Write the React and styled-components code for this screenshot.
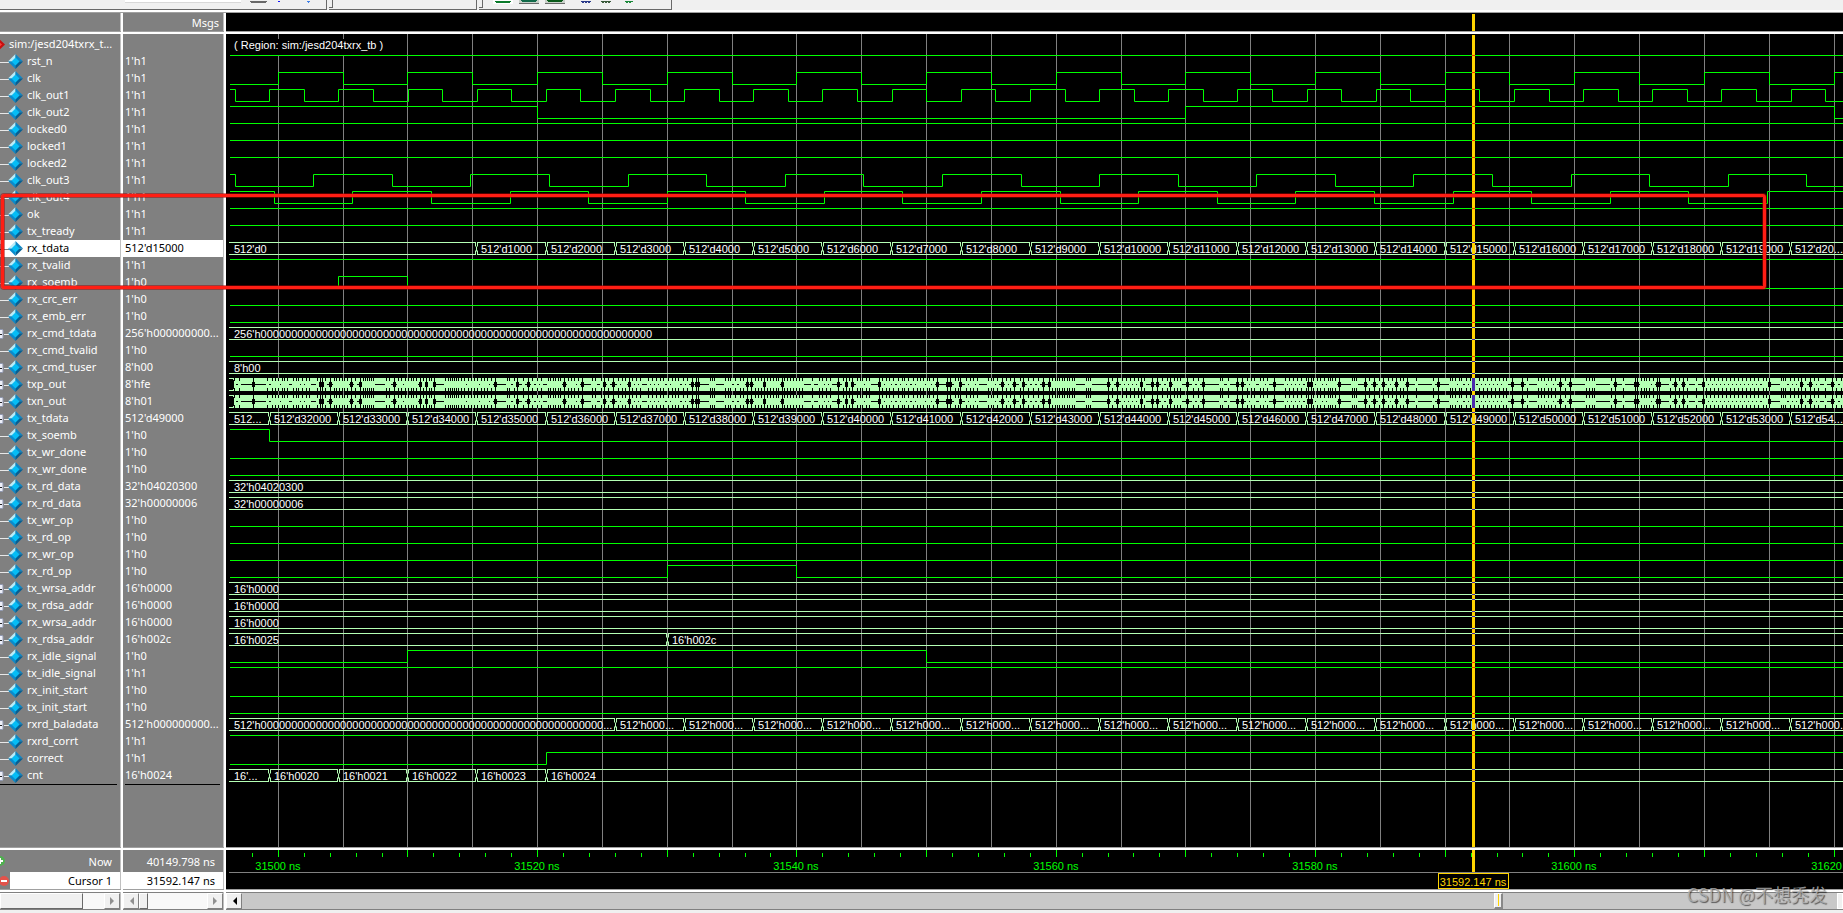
import React from "react";
import styled, { createGlobalStyle } from "styled-components";

const GREEN = "#00ff00";
const MINT = "#b4ffb4";
const GOLD = "#ffd500";
const FONT = '"Noto Sans", sans-serif';
const WAVE_FONT = '"Liberation Sans", sans-serif';

const GlobalStyle = createGlobalStyle`
  * { box-sizing: border-box; }
  body { margin: 0; background: #f0f0f0; font: 11px/17px ${FONT}; color: #fff; }
  ul { list-style: none; margin: 0; padding: 0; }
  button { font: inherit; padding: 0; }
`;

/* ---------- data ---------- */

const CLOCK_PX = 12.965;
const ORIGIN = 52.3;
const at = (ns) => Math.floor(ORIGIN + (ns - 31500) * CLOCK_PX);
const frame = (n) => Math.floor(43.5 + n * 69.15);
const LAST_FRAME = 22;
const END = 2600;

const toggles = (first, half, count) =>
  Array.from({ length: count }, (_, i) => Math.floor(first + i * half));
const frames = (firstFrame, format) =>
  Array.from({ length: LAST_FRAME - firstFrame + 1 }, (_, i) => [
    frame(firstFrame + i),
    format(i, firstFrame + i === LAST_FRAME),
  ]);
const counter = (first) => (i, last) => {
  const value = String(first + i * 1000);
  return `512'd${last ? `${value.slice(0, 2)}...` : value}`;
};

const bit = (name, value, level, edges = []) => ({ name, value, level, edges });
const bus = (name, value, cells) => ({ name, value, cells });

const SIGNALS = [
  bit("rst_n", "1'h1", 1),
  bit("clk", "1'h1", 0, toggles(ORIGIN, 64.825, 30)),
  bit("clk_out1", "1'h1", 1, toggles(9.2, 34.575, 60)),
  bit("clk_out2", "1'h1", 1, [at(31520), at(31570), at(31620)]),
  bit("locked0", "1'h1", 1),
  bit("locked1", "1'h1", 1),
  bit("locked2", "1'h1", 1),
  bit("clk_out3", "1'h1", 1, toggles(9.2, 78.58, 24)),
  bit("clk_out4", "1'h1", 1, toggles(48.3, 78.58, 24)),
  bit("ok", "1'h1", 1),
  bit("tx_tready", "1'h1", 1),
  { ...bus("rx_tdata", "512'd15000", [[3, "512'd0"], ...frames(3, counter(1000))]), selected: true },
  bit("rx_tvalid", "1'h1", 1),
  bit("rx_soemb", "1'h0", 0, [frame(1), frame(2)]),
  bit("rx_crc_err", "1'h0", 0),
  bit("rx_emb_err", "1'h0", 0),
  bus("rx_cmd_tdata", "256'h000000000...", [[3, "256'h" + "0".repeat(64)]]),
  bit("rx_cmd_tvalid", "1'h0", 0),
  bus("rx_cmd_tuser", "8'h00", [[3, "8'h00"]]),
  { name: "txp_out", value: "8'hfe", serial: true },
  { name: "txn_out", value: "8'h01", serial: true },
  bus("tx_tdata", "512'd49000", [[3, "512..."], ...frames(0, counter(32000))]),
  bit("tx_soemb", "1'h0", 1, [frame(0)]),
  bit("tx_wr_done", "1'h0", 0),
  bit("rx_wr_done", "1'h0", 0),
  bus("tx_rd_data", "32'h04020300", [[3, "32'h04020300"]]),
  bus("rx_rd_data", "32'h00000006", [[3, "32'h00000006"]]),
  bit("tx_wr_op", "1'h0", 0),
  bit("tx_rd_op", "1'h0", 0),
  bit("rx_wr_op", "1'h0", 0),
  bit("rx_rd_op", "1'h0", 0, [at(31530), at(31540)]),
  bus("tx_wrsa_addr", "16'h0000", [[3, "16'h0000"]]),
  bus("tx_rdsa_addr", "16'h0000", [[3, "16'h0000"]]),
  bus("rx_wrsa_addr", "16'h0000", [[3, "16'h0000"]]),
  bus("rx_rdsa_addr", "16'h002c", [[3, "16'h0025"], [at(31530), "16'h002c"]]),
  bit("rx_idle_signal", "1'h0", 0, [at(31510), at(31550)]),
  bit("tx_idle_signal", "1'h1", 1),
  bit("rx_init_start", "1'h0", 0),
  bit("tx_init_start", "1'h0", 0),
  bus("rxrd_baladata", "512'h000000000...", [[3, "512'h" + "0".repeat(56) + "..."], ...frames(5, () => "512'h000...")]),
  bit("rxrd_corrt", "1'h1", 1),
  bit("correct", "1'h1", 0, [frame(4)]),
  bus("cnt", "16'h0024", [[3, "16'..."], [frame(0), "16'h0020"], [frame(1), "16'h0021"], [frame(2), "16'h0022"], [frame(3), "16'h0023"], [frame(4), "16'h0024"]]),
];

/* Transitions of the serial lanes; a negative entry is a burst too fast to resolve. */
const BURSTS = [
  { from: -1, scale: 3, marks: [27,43,-83,125,141,150,158,171,177,187,203,212,220,232,242,253,275,-284,-290,300,-316,327,334,342,350,358,366,-377,390,-405,415,421,427,433,439,443,482,492,-508,520,528,540,549,557,565,574,-585,595,-603,612,618,-628,660,668,674,680,686,692,700,708,716,728,738,748,757,768,778,786,798,-810,845,851,866,-876,893,-908,922,936,948,968,975,983,990,998,1006,-1018,1030,1038,1048,1060,-1070,1102,1110,1128,-1137,1148,-1163,1178,1190,1200,-1213,1222,1232,1245,1270,1280,1292,1305,1315,1330,1340,1350,1360,1375,1387,-1400,-1413,-1418,1455,1462,1468,1500,1508,1516,1530,1545,1555] },
  { from: 519, scale: 3, marks: [-5,-17,30,38,48,-56,66,75,85,93,100,-110,118,125,135,145,153,162,172,202,222,232,243,256,-280,293,-303,312,-322,335,345,352,362,372,-402,412,422,432,445,460,470,478,490,503,515,525,535,545,553,563,-577,-607,-615,630,638,-645,662,675,685,697,730,738,745,755,-770,782,795,-808,825,-835,850,865,878,-893,-911,922,930,935,942,950,958,965,973,980,988,1022,1029,1035,-1090,1100,-1115,1130,1142,1155,1168,1178,-1187,1197,-1220,-1237,1250,1265,-1275,1288,1295,1305,-1325,1345,1358,-1375,1425,1432,1450,-1475,-1490,1505,1518,1528,1545,1555] },
  { from: 1039, scale: 2.713, marks: [5,-24,55,65,77,88,98,110,-118,-124,130,140,150,160,170,176,182,190,-200,235,241,247,-272,283,-295,308,-320,333,345,-355,365,375,-385,411,455,-470,502,508,516,525,533,545,555,567,580,592,602,612,625,635,645,655,-670,-697,710,740,748,757,767,777,787,-800,813,-828,870,878,886,892,940,-950,970,-1004,-1010,1020,1028,1035,1043,1052,-1064,-1069,1100,-1113,1122,-1133,1145,1170,-1187,1197,1207,1218,1228,1240,1250,1262,1273,1283,1293,1305,1317,1328,1338,1350,1360,-1368,1400,1406,1412,1425,1435,1445,-1455,1465,-1478,1490,1500,1520,-1537,1550,1562] },
];
const MARKS = BURSTS.flatMap(({ from, scale, marks }) =>
  marks.map((m) => ({ x: from + Math.round(Math.abs(m) / scale), dense: m < 0 }))
);

/* ---------- toolbar ---------- */

const Toolbar = styled.header`
  display: flex; gap: 2px; height: 13px; overflow: hidden;
  background: #f0f0f0; border-bottom: 1px solid #a0a0a0; box-shadow: inset 0 -2px #fff;
`;
const ToolGroup = styled.div`
  display: flex; flex: none; align-items: flex-start; gap: ${(p) => p.$gap || 6}px;
  width: ${(p) => p.$width}px; height: 10px; padding-left: ${(p) => p.$pad || 0}px;
  border-right: 1px solid #696969; border-bottom: 1px solid #696969; overflow: hidden;
`;
const Grip = styled.i`
  width: 4px; height: 8px; margin-right: 4px;
  border-right: 1px solid #696969; border-bottom: 1px solid #696969;
`;
const ToolField = styled.input`
  width: 116px; height: 3px; padding: 0; border: 0; border-bottom: 1px solid #d8d8d8; background: #fff;
`;
const ToolButton = styled.button`
  display: block; width: 20px; height: 4px; border: 0; overflow: hidden;
  background: ${(p) => (p.$on ? "#fff" : p.$raised ? "#c8d0c8" : "transparent")};
  border-bottom: ${(p) => (p.$raised ? "1px solid #696969" : "0")};
  svg { display: block; }
`;

function ToolIcon({ fill, x = 4, w = 12, solid }) {
  return (
    <svg width="20" height="3" aria-hidden="true">
      <path d={`M${x} 0h${w}M${x + 1} 1h${w - 2}`} stroke={fill} strokeWidth="2" strokeDasharray={solid || w > 15 ? "none" : "2 1"} />
    </svg>
  );
}

/* ---------- panes ---------- */

const Window = styled.div`
  position: relative; display: flex; flex-direction: column; min-height: 100vh; overflow: hidden;
`;
const Panes = styled.main`
  display: flex; flex: 1; padding-bottom: 3px; background: #f0f0f0;
`;
const Pane = styled.section`
  display: flex; flex-direction: column; min-width: 0;
  flex: ${(p) => (p.$width ? `0 0 ${p.$width}px` : "1 1 0")};
  background: ${(p) => (p.$dark ? "#000" : "#808080")};
  border-right: ${(p) => (p.$dark ? "0" : "2px solid #fff")};
  box-shadow: ${(p) => (p.$dark ? "none" : "inset -1px 0 #c0c0c0")};
`;
const PaneHead = styled.div`
  flex: none; height: 21px; padding: 1px 5px 0 0; text-align: right;
  border-bottom: 2px solid #fff; box-shadow: inset 0 -1px #a0a0a0;
`;
const PaneBody = styled.div`
  flex: 1 0 781px; padding-top: ${(p) => (p.$flush ? 0 : 2)}px; overflow: hidden;
  svg { display: block; }
`;
const PaneFoot = styled.div`
  flex: none; height: 44px; overflow: hidden;
  border-top: 2px solid #fff; border-bottom: 2px solid #fff;
  box-shadow: 0 -1px #a0a0a0, inset 0 -1px #a0a0a0;
  svg { display: block; }
`;
const FootRow = styled.div`
  display: flex; align-items: center; justify-content: flex-end;
  height: ${(p) => (p.$cursor ? 17 : 22)}px; margin-right: 1px; padding-right: 8px;
  background: ${(p) => (p.$cursor ? "#fff" : "transparent")};
  color: ${(p) => (p.$cursor ? "#000" : "#fff")};
  svg { flex: none; }
`;
const FootIcon = styled.span`
  display: flex; align-items: center; width: 10px; height: 100%; margin-right: auto; background: #808080;
`;
const SignalRow = styled.li`
  display: flex; align-items: flex-start; height: 17px; line-height: 15px;
  margin-right: 1px; white-space: nowrap; overflow: hidden;
  background: ${(p) => (p.$selected ? "#fff" : "transparent")};
  color: ${(p) => (p.$selected ? "#000" : "#fff")};
  svg { flex: none; margin-right: 3px; }
`;
const ValueRow = styled(SignalRow)`
  padding-left: 2px;
`;
const ListEnd = styled.hr`
  height: 1px; margin: 0 4px 0 ${(p) => (p.$inset ? 2 : 0)}px; border: 0; background: #000;
`;

function SignalIcon({ bus: isBus, selected }) {
  return (
    <svg width="24" height="17" aria-hidden="true">
      <path d={isBus ? "M4 9.5h5" : "M0 9.5h9"} stroke={selected ? "#808080" : "#e8e8e8"} />
      {isBus && <rect x="-6" y="4.5" width="9" height="9" rx="1" fill={selected ? "#a8a8a8" : "#eef0fa"} stroke="#9098b0" />}
      {isBus && <path d="M-2 9.5h4" stroke="#222" />}
      <path d="M15.500 1L8 8.500H15.500Z" fill="#b9ecf9" />
      <path d="M15.500 1L23 8.500H15.500Z" fill="#0e86c4" />
      <path d="M8 8.500L15.500 16V8.500Z" fill="#0a8bcc" />
      <path d="M23 8.500L15.500 16V8.500Z" fill="#055f92" />
      <path d="M15.500 4.500L19.500 8.500L15.500 12.500L11.500 8.500Z" fill="#05bdf5" />
    </svg>
  );
}

/* ---------- scroll bars ---------- */

const ScrollBar = styled.div`
  display: flex; flex: none; height: 18px; margin-right: ${(p) => (p.$wave ? 0 : 1)}px;
  border-top: 1px solid #808080; border-bottom: 1px solid #808080;
  background: ${(p) => (p.$wave ? "#c8c8c8" : "#f8f8f8")};
`;
const ScrollThumb = styled.div`
  width: ${(p) => p.$width}px; margin-right: auto; background: #f0f0f0;
  border: 1px solid #fff; border-right-color: #696969; border-bottom-color: #696969;
`;
const ScrollButton = styled.button`
  display: flex; align-items: center; justify-content: center;
  width: 16px; height: 16px; background: #f0f0f0;
  border: 1px solid #fff; border-right-color: #808080; border-bottom-color: #808080;
`;
const CursorThumb = styled.div`
  width: 9px; margin-left: auto; margin-right: ${(p) => p.$after}px; background: #f0f0f0;
  border: 1px solid #fff; border-right: 2px solid #888; border-bottom: 2px solid #888;
  &::after { content: ""; display: block; width: 1px; height: 12px; margin-left: 3px; background: ${GOLD}; }
`;
const EdgeThumb = styled.div`
  width: 6px; background: #f0f0f0; border: 1px solid #fff;
`;

function Arrow({ left, color = "#909090" }) {
  return (
    <svg width="5" height="8" aria-hidden="true">
      <path d={left ? "M5 0V8L1 4Z" : "M0 0V8L4 4Z"} fill={color} />
    </svg>
  );
}

/* ---------- wave forms ---------- */

const WaveText = styled.text`
  font: 11px ${WAVE_FONT}; white-space: pre;
  fill: ${(p) => p.$fill || "#fff"};
`;

function bitPath({ level, edges }, y) {
  let high = level === 1;
  const h = (v) => (v ? y : y + 12);
  let d = `M4 ${h(high)}`;
  edges.forEach((x) => {
    d += `H${x + 0.5}V${h(!high)}`;
    high = !high;
  });
  return `${d}H${END}`;
}

function BusWave({ cells, y }) {
  let d = "";
  cells.forEach(([x], i) => {
    const next = i + 1 < cells.length ? cells[i + 1][0] : END;
    const start = i ? x + 1 : x;
    d += `M${start} ${y}H${next}M${start} ${y + 12}H${next}`;
    if (i) {
      d += `M${x - 0.5} ${y}v4M${x + 1.5} ${y}v4M${x + 0.5} ${y + 4}v5M${x - 0.5} ${y + 8}v4M${x + 1.5} ${y + 8}v4`;
    }
  });
  return (
    <g>
      <path d={d} stroke={MINT} fill="none" />
      {cells.map(([x, label]) => (
        <WaveText key={x} x={x + 5} y={y + 10}>{label}</WaveText>
      ))}
    </g>
  );
}

function SerialWave({ y }) {
  const top = y - 0.5;
  const notches = MARKS.map(({ x }) => `M${x + 0.5} ${top}v3m0 7v3`).join("");
  const gaps = MARKS.map(({ x }) => `M${x - 1} ${y + 6}h3`).join("");
  const lenses = MARKS.filter((m) => m.dense)
    .map(({ x }) => `M${x - 1} ${top + 4}h3v5h-3zM${x} ${top + 3}h1v7h-1z`)
    .join("");
  return (
    <g shapeRendering="crispEdges">
      <rect x="3" y={top} width={END} height="13" fill={MINT} />
      <path d={`M8 ${y + 6}H${END}`} stroke="#000" />
      <path d={gaps} stroke={MINT} />
      <path d={notches} stroke="#000" />
      <path d={lenses} fill="#000" />
      <path d={`M3 ${top + 1}h4l1 2v7l-1 2h-4z`} fill="#000" />
    </g>
  );
}

const CURSOR = 1247.5;

function WaveCanvas() {
  const grid = Array.from({ length: 36 }, (_, i) => `M${at(31500 + 5 * i) + 0.5} 0V2000`).join("");
  return (
    <svg width="100%" height="813" role="img" aria-label="Wave forms">
      <path d={grid} stroke="#808080" />
      <rect x="4" y="5" width="162" height="16" fill="#000" />
      <WaveText x="8" y="15">( Region: sim:/jesd204txrx_tb )</WaveText>
      {SIGNALS.map((s, i) => {
        const y = 21.5 + 17 * i;
        if (s.serial) return <SerialWave key={s.name} y={y} />;
        if (s.cells) return <BusWave key={s.name} cells={s.cells} y={y} />;
        return <path key={s.name} d={bitPath(s, y)} stroke={GREEN} fill="none" />;
      })}
      <path d={`M${CURSOR} 1V813`} stroke={GOLD} strokeWidth="3" />
      {SIGNALS.map((s, i) => (
        <path
          key={s.name}
          d={s.serial ? `M${CURSOR} ${21 + 17 * i}v13` : `M${CURSOR - 1.5} ${21.5 + 17 * i + (s.value === "1'h0" ? 12 : 0)}h3${s.cells ? "m-3 12h3" : ""}`}
          stroke={s.serial || s.cells ? "#4b2aae" : "#ff2a00"}
          strokeWidth={s.serial ? 3 : 1}
        />
      ))}
    </svg>
  );
}

function HeadCursor() {
  return (
    <svg width="100%" height="18" aria-hidden="true">
      <path d={`M${CURSOR} 1V18`} stroke={GOLD} strokeWidth="3" />
    </svg>
  );
}

const WaveHead = styled(PaneHead)`
  padding: 0;
  svg { display: block; }
`;

function TimeRuler() {
  const steps = Array.from({ length: 64 }, (_, i) => 31498 + 2 * i);
  return (
    <svg width="100%" height="39" role="img" aria-label="Time line">
      {steps.map((ns) => (
        <path key={ns} d={ns % 10 === 0 ? `M${at(ns) + 0.5} 0v7` : `M${at(ns) + 0.5} 3v4`} stroke={GREEN} />
      ))}
      {steps.filter((ns) => ns % 20 === 0).map((ns) => (
        <WaveText key={ns} x={at(ns)} y="20" textAnchor="middle" $fill={GREEN}>{`${ns} ns`}</WaveText>
      ))}
      <path d={`M3 22.5H${END}`} stroke="#808080" />
      <path d={`M${CURSOR} 0V22`} stroke={GOLD} strokeWidth="3" />
      <rect x="1212.500" y="23.500" width="70" height="15" fill="#000" stroke={GOLD} />
      <WaveText x="1247" y="36" textAnchor="middle" $fill={GOLD}>31592.147 ns</WaveText>
    </svg>
  );
}

/* ---------- overlays ---------- */

const Highlight = styled.div`
  position: absolute; top: 194px; left: 1px; right: 77px; height: 95px;
  border: 3px solid #ff1e14; border-radius: 3px; pointer-events: none;
  box-shadow: 0 0 0 1px #a0000080, inset 0 0 0 1px #a0000080;
`;
const Watermark = styled.div`
  position: absolute; right: 16px; bottom: 7px; color: #b4b4b4cc; pointer-events: none;
  font: 18px/24px "Noto Sans CJK SC", sans-serif;
  text-shadow: 1px 1px 1px #00000090; white-space: nowrap;
`;

export default function App() {
  return (
    <>
      <GlobalStyle />
      <Window>
        <Toolbar>
          <ToolGroup $width={327} $pad={125} $gap={9}>
            <ToolField aria-label="Search" />
            <ToolButton aria-label="Search type"><ToolIcon fill="#696969" x={0} w={17} /></ToolButton>
            <ToolButton aria-label="Find previous"><ToolIcon fill="#1414ff" x={0} w={2} solid /></ToolButton>
            <ToolButton aria-label="Find next"><ToolIcon fill="#3f7fe8" x={0} w={3} solid /></ToolButton>
          </ToolGroup>
          <ToolGroup $width={148}><Grip /></ToolGroup>
          <ToolGroup $width={193}>
            <Grip />
            <ToolButton $on aria-label="Wave view"><ToolIcon fill="#0a7a2a" x={2} w={16} /></ToolButton>
            <ToolButton $raised aria-label="Edge view"><ToolIcon fill="#126a4a" x={2} w={16} /></ToolButton>
            <ToolButton $raised aria-label="Fill view"><ToolIcon fill="#0a5a1a" x={2} w={16} /></ToolButton>
            <ToolButton aria-label="Grid"><ToolIcon fill="#2a3a8a" x={10} w={10} /></ToolButton>
            <ToolButton aria-label="Expand"><ToolIcon fill="#3a5a3a" x={4} w={10} /></ToolButton>
            <ToolButton aria-label="Collapse"><ToolIcon fill="#1a8a3a" x={2} w={8} /></ToolButton>
          </ToolGroup>
        </Toolbar>
        <Panes>
          <Pane $width={123} aria-label="Signals">
            <PaneHead />
            <PaneBody>
              <ul>
                <SignalRow>
                  <svg width="6" height="17" aria-hidden="true">
                    <path d="M-3 1L5 8.500L-3 16Z" fill="#c80f0f" />
                    <path d="M-3 4L2 8.500L-3 13Z" fill="#ff3a3a" />
                  </svg>
                  sim:/jesd204txrx_t...
                </SignalRow>
                {SIGNALS.map((s) => (
                  <SignalRow key={s.name} $selected={s.selected}>
                    <SignalIcon bus={Boolean(s.cells || s.serial)} selected={s.selected} />
                    {s.name}
                  </SignalRow>
                ))}
              </ul>
              <ListEnd />
            </PaneBody>
            <PaneFoot>
              <FootRow>
                <FootIcon>
                  <svg width="6" height="12" aria-hidden="true">
                    <circle cx="0" cy="6" r="5" fill="#4faf4f" />
                    <path d="M-3 6h6M0 3v6" stroke="#fff" strokeWidth="2" />
                  </svg>
                </FootIcon>
                Now
              </FootRow>
              <FootRow $cursor>
                <FootIcon>
                  <svg width="10" height="12" aria-hidden="true">
                    <circle cx="4" cy="6" r="5" fill="#e2524a" />
                    <path d="M1 6h6" stroke="#fff" strokeWidth="2" />
                  </svg>
                </FootIcon>
                Cursor 1
              </FootRow>
            </PaneFoot>
            <ScrollBar>
              <ScrollThumb $width={83} />
              <ScrollButton aria-label="Scroll signals right"><Arrow /></ScrollButton>
            </ScrollBar>
          </Pane>
          <Pane $width={103} aria-label="Values">
            <PaneHead>Msgs</PaneHead>
            <PaneBody>
              <ul>
                <ValueRow />
                {SIGNALS.map((s) => (
                  <ValueRow key={s.name} $selected={s.selected}>{s.value}</ValueRow>
                ))}
              </ul>
              <ListEnd $inset />
            </PaneBody>
            <PaneFoot>
              <FootRow>40149.798 ns</FootRow>
              <FootRow $cursor>31592.147 ns</FootRow>
            </PaneFoot>
            <ScrollBar>
              <ScrollButton aria-label="Scroll values left"><Arrow left /></ScrollButton>
              <ScrollThumb $width={9} />
              <ScrollButton aria-label="Scroll values right"><Arrow /></ScrollButton>
            </ScrollBar>
          </Pane>
          <Pane $dark aria-label="Waves">
            <WaveHead><HeadCursor /></WaveHead>
            <PaneBody $flush><WaveCanvas /></PaneBody>
            <PaneFoot><TimeRuler /></PaneFoot>
            <ScrollBar $wave>
              <ScrollButton aria-label="Scroll waves left"><Arrow left color="#000" /></ScrollButton>
              <CursorThumb $after={334} />
              <EdgeThumb />
            </ScrollBar>
          </Pane>
        </Panes>
        <Highlight />
        <Watermark>CSDN @不想秃发</Watermark>
      </Window>
    </>
  );
}
